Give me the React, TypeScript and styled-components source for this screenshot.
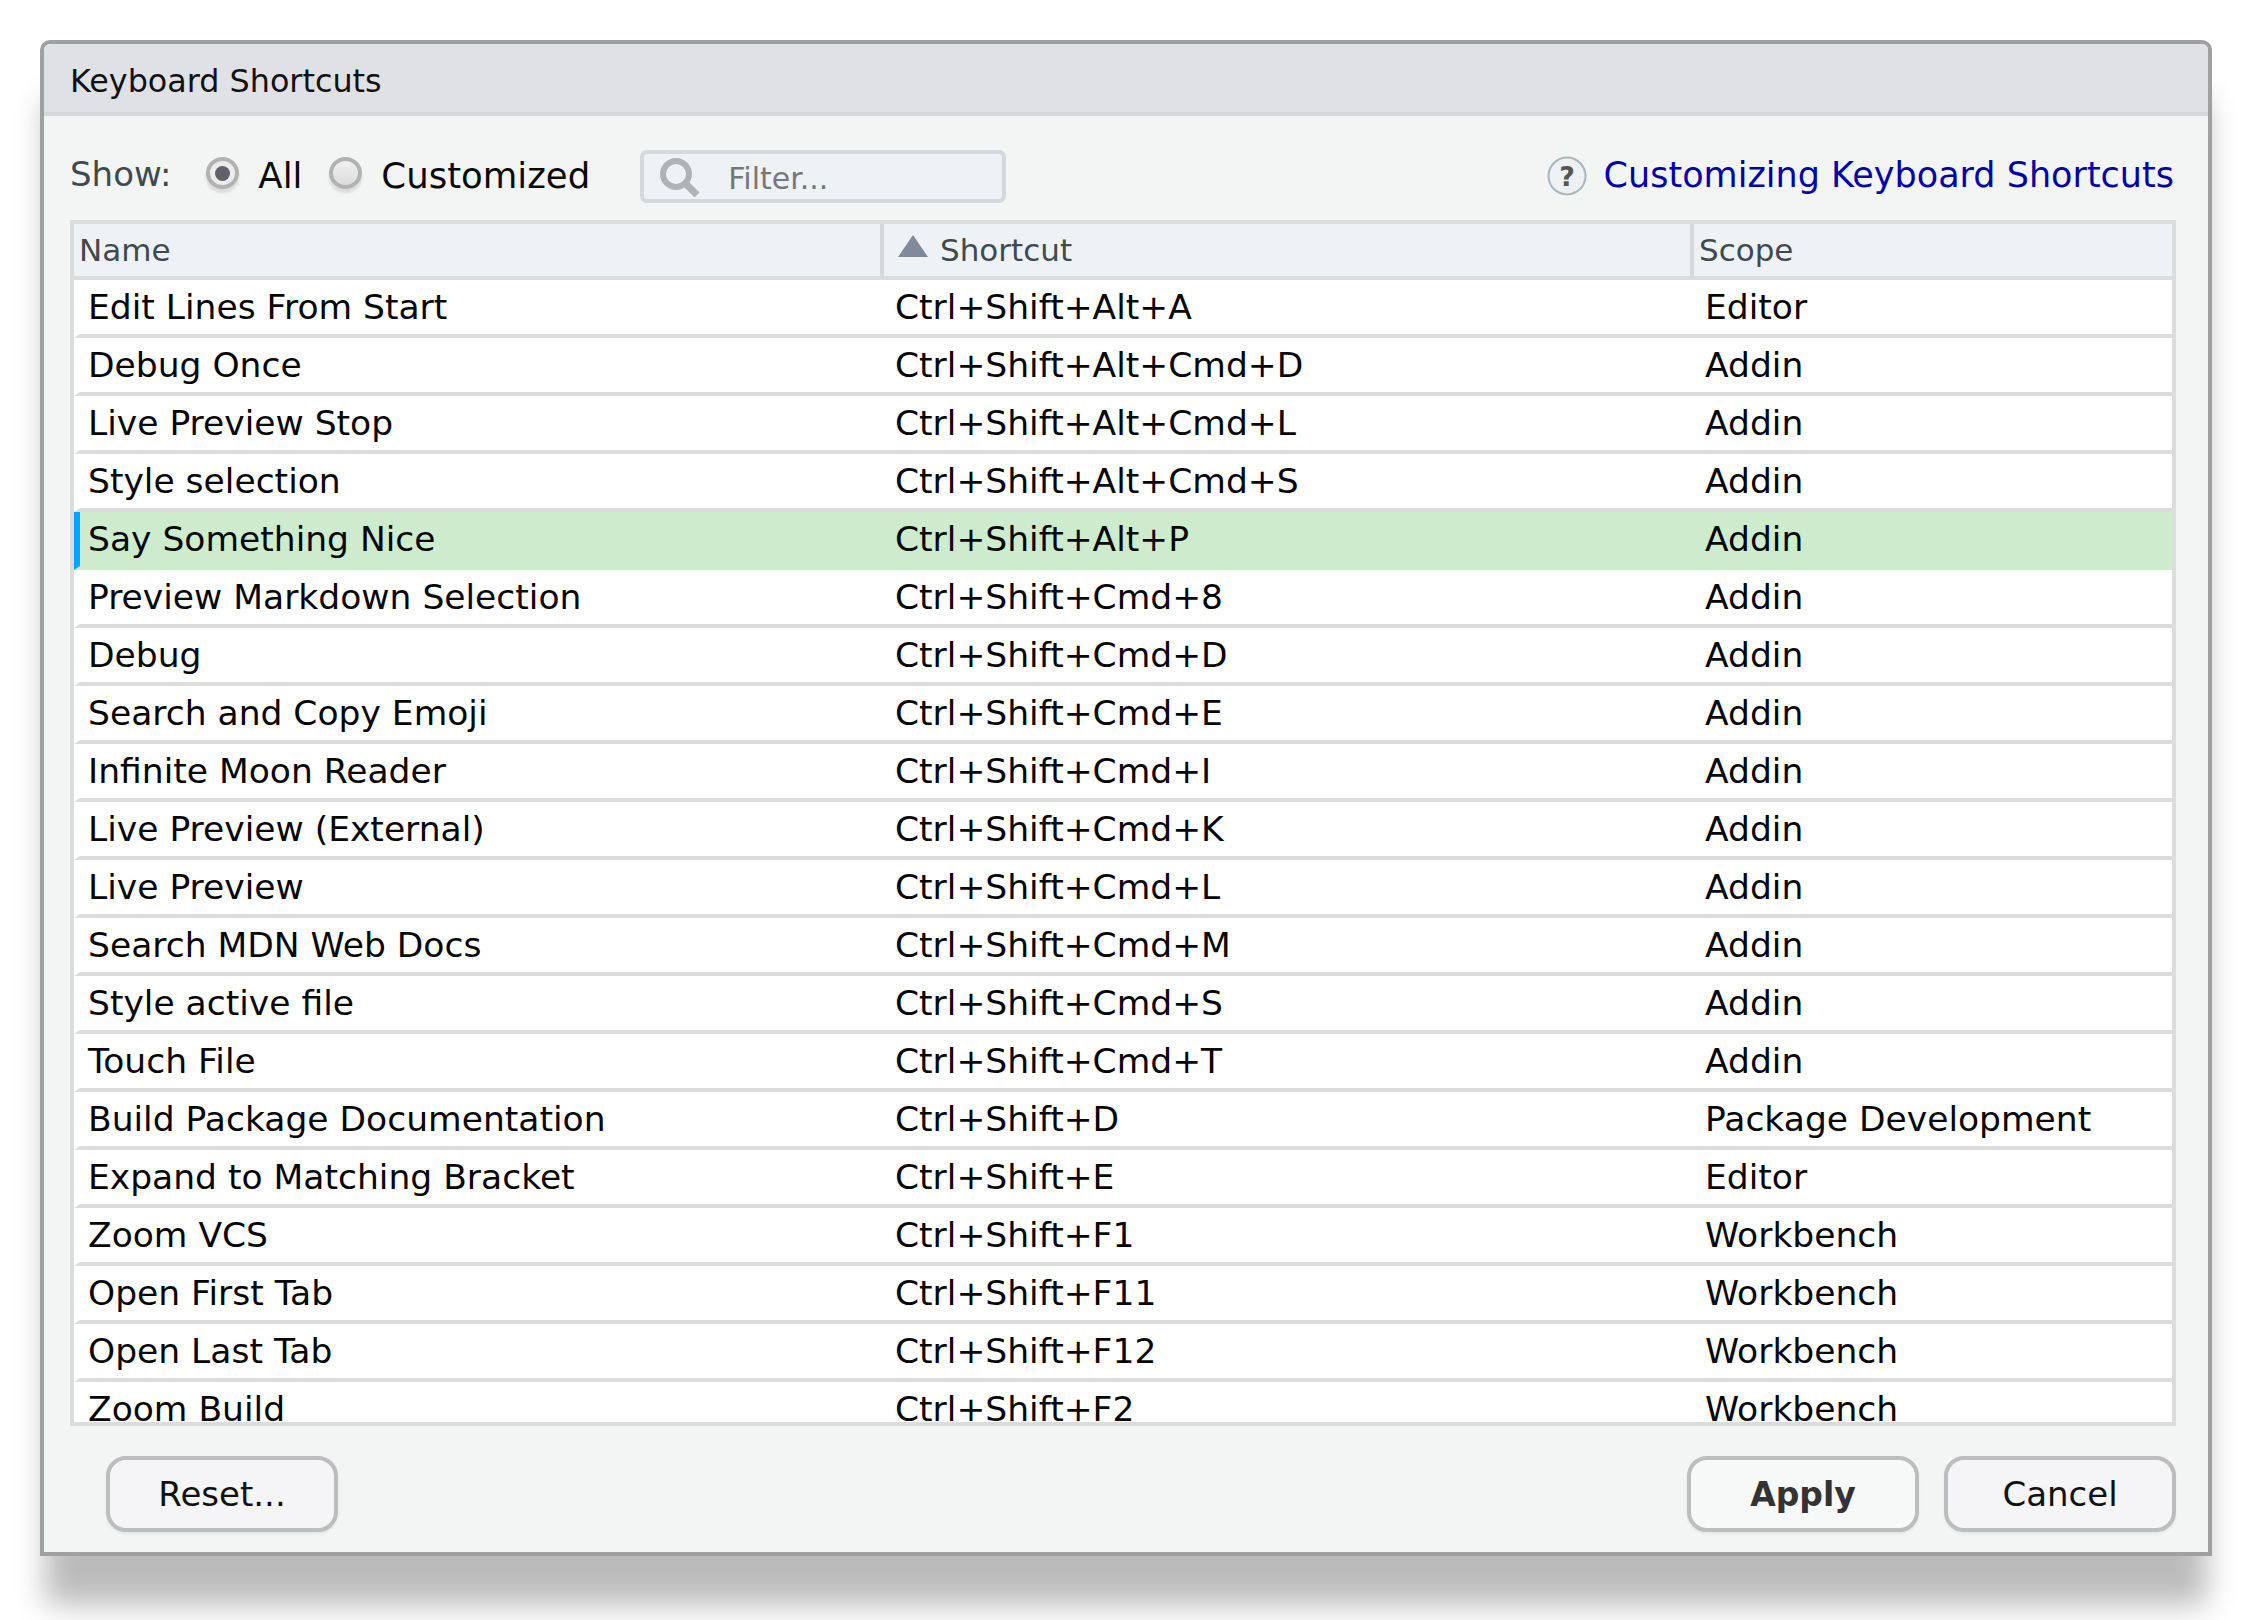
import React from "react";
import styled, { createGlobalStyle } from "styled-components";

const Global = createGlobalStyle`
  html, body { margin: 0; padding: 0; background: #fff; }
  body { width: 2248px; height: 1620px; overflow: hidden; font-family: "DejaVu Sans", sans-serif; }
`;

const Page = styled.div`
  width: 2248px;
  height: 1620px;
  padding: 40px 36px 64px 40px;
  box-sizing: border-box;
`;

const Dialog = styled.div`
  height: 1516px;
  box-sizing: border-box;
  display: flex;
  flex-direction: column;
  background: #f3f5f4;
  border: 4px solid #a0a0a0;
  border-radius: 10px 10px 0 0;
  box-shadow: 0 54px 30px -5px rgba(0, 0, 0, 0.27);
`;

const TitleBar = styled.div`
  height: 64px;
  padding: 4px 0 0 26px;
  box-sizing: content-box;
  display: flex;
  align-items: center;
  background: #e0e1e5;
  border-bottom: 4px solid #d5d8db;
  border-radius: 6px 6px 0 0;
  font-size: 31.8px;
  color: #111;
`;

const Body = styled.div`
  flex: 1;
  display: flex;
  flex-direction: column;
  padding: 34px 32px 20px 26px;
  min-height: 0;
`;

const Toolbar = styled.div`
  height: 53px;
  display: flex;
  align-items: center;
  margin-bottom: 17px;
`;

const ShowLabel = styled.span`
  font-size: 34px;
  color: #3f4a50;
  margin-right: 35px;
  margin-top: -6px;
`;

const Radio = styled.span<{ $on?: boolean }>`
  width: 33px;
  height: 32px;
  box-sizing: border-box;
  border-radius: 50%;
  border: 4px solid #b2b2b2;
  background: ${(p) => (p.$on ? "#ececec" : "linear-gradient(#f0f0f0, #dcdcdc)")};
  box-shadow: 0 4px 3px rgba(0, 0, 0, 0.1);
  display: inline-flex;
  align-items: center;
  justify-content: center;
  margin: -7px 19px 0 0;
  &::after {
    content: "";
    display: ${(p) => (p.$on ? "block" : "none")};
    width: 15px;
    height: 15px;
    border-radius: 50%;
    background: #626266;
  }
`;

const RadioLabel = styled.span<{ $gap: number }>`
  font-size: 35.5px;
  color: #0a0a0a;
  margin-right: ${(p) => p.$gap}px;
  margin-top: -2px;
`;

const Filter = styled.div`
  width: 366px;
  height: 53px;
  box-sizing: border-box;
  display: flex;
  align-items: center;
  padding-left: 16px;
  background: #eff2f5;
  border: 4px solid #d6d9dc;
  border-radius: 7px;
  font-size: 30px;
  color: #777;
`;

const FilterText = styled.span`
  margin-left: 28px;
  margin-top: 4px;
`;

const HelpLink = styled.div`
  margin: -4px 2px 0 auto;
  display: flex;
  align-items: center;
  gap: 17px;
  font-size: 35px;
  color: #0000a8;
`;

const HelpIcon = styled.svg`
  margin-top: 3px;
`;

const Table = styled.div`
  flex: none;
  height: 1206px;
  box-sizing: border-box;
  border: 4px solid #dcdcdc;
  overflow: hidden;
  background: #fff;
`;

const HeaderRow = styled.div`
  display: grid;
  grid-template-columns: 810px 810px 1fr;
  height: 52px;
  box-sizing: content-box;
  background: #eff2f5;
  border-bottom: 4px solid #dcdcdc;
`;

const HeaderCell = styled.div<{ $last?: boolean }>`
  display: flex;
  align-items: center;
  gap: 12px;
  padding-left: 5px;
  font-size: 31px;
  color: #3f4a50;
  border-right: ${(p) => (p.$last ? "none" : "4px solid #d6d9dc")};
`;

const SortArrow = styled.svg`
  width: 30px;
  height: 22px;
  margin: -8px 0 0 9px;
`;

const Row = styled.div<{ $selected?: boolean }>`
  display: grid;
  grid-template-columns: 807px 810px 1fr;
  height: 54px;
  box-sizing: content-box;
  align-items: center;
  font-size: 34.5px;
  color: #050505;
  background: ${(p) => (p.$selected ? "#cdeccd" : "#fff")};
  border-left: 6px solid ${(p) => (p.$selected ? "#00a5ff" : "#fff")};
  border-bottom: 4px solid ${(p) => (p.$selected ? "#cdeccd" : "#dcdcdc")};
`;

const Cell = styled.div`
  padding-left: 8px;
  white-space: nowrap;
`;

const Footer = styled.div`
  display: flex;
  gap: 25px;
  margin-top: 30px;
  padding-left: 36px;
`;

const Button = styled.button<{ $primary?: boolean; $left?: boolean }>`
  width: 232px;
  height: 76px;
  box-sizing: border-box;
  border: 4px solid #bdbdbd;
  border-radius: 20px;
  background: ${(p) => (p.$primary ? "#f7f8f8" : "#f5f5f8")};
  font-family: "DejaVu Sans", sans-serif;
  font-size: ${(p) => (p.$primary ? 33 : 34)}px;
  font-weight: ${(p) => (p.$primary ? 700 : 400)};
  color: ${(p) => (p.$primary ? "#333" : "#111")};
  margin-right: ${(p) => (p.$left ? "auto" : "0")};
  box-shadow: 0 2px 3px rgba(0, 0, 0, 0.06);
  padding: 0;
`;

const rows: [string, string, string][] = [
  ["Edit Lines From Start", "Ctrl+Shift+Alt+A", "Editor"],
  ["Debug Once", "Ctrl+Shift+Alt+Cmd+D", "Addin"],
  ["Live Preview Stop", "Ctrl+Shift+Alt+Cmd+L", "Addin"],
  ["Style selection", "Ctrl+Shift+Alt+Cmd+S", "Addin"],
  ["Say Something Nice", "Ctrl+Shift+Alt+P", "Addin"],
  ["Preview Markdown Selection", "Ctrl+Shift+Cmd+8", "Addin"],
  ["Debug", "Ctrl+Shift+Cmd+D", "Addin"],
  ["Search and Copy Emoji", "Ctrl+Shift+Cmd+E", "Addin"],
  ["Infinite Moon Reader", "Ctrl+Shift+Cmd+I", "Addin"],
  ["Live Preview (External)", "Ctrl+Shift+Cmd+K", "Addin"],
  ["Live Preview", "Ctrl+Shift+Cmd+L", "Addin"],
  ["Search MDN Web Docs", "Ctrl+Shift+Cmd+M", "Addin"],
  ["Style active file", "Ctrl+Shift+Cmd+S", "Addin"],
  ["Touch File", "Ctrl+Shift+Cmd+T", "Addin"],
  ["Build Package Documentation", "Ctrl+Shift+D", "Package Development"],
  ["Expand to Matching Bracket", "Ctrl+Shift+E", "Editor"],
  ["Zoom VCS", "Ctrl+Shift+F1", "Workbench"],
  ["Open First Tab", "Ctrl+Shift+F11", "Workbench"],
  ["Open Last Tab", "Ctrl+Shift+F12", "Workbench"],
  ["Zoom Build", "Ctrl+Shift+F2", "Workbench"],
];

export default function App() {
  return (
    <Page>
      <Global />
      <Dialog>
        <TitleBar>Keyboard Shortcuts</TitleBar>
        <Body>
          <Toolbar>
            <ShowLabel>Show:</ShowLabel>
            <Radio $on />
            <RadioLabel $gap={27}>All</RadioLabel>
            <Radio />
            <RadioLabel $gap={50}>Customized</RadioLabel>
            <Filter>
              <svg width="40" height="40" viewBox="0 0 40 40">
                <circle cx="16" cy="17" r="13" fill="none" stroke="#aeb3b5" strokeWidth="6" />
                <path d="M26 27 L37 38" stroke="#aeb3b5" strokeWidth="7" />
              </svg>
              <FilterText>Filter...</FilterText>
            </Filter>
            <HelpLink>
              <HelpIcon width="40" height="40" viewBox="0 0 40 40">
                <circle cx="20" cy="20" r="18.5" fill="#eef1f3" stroke="#a9b6bc" strokeWidth="2" />
                <text x="20" y="30" textAnchor="middle" fontSize="27" fontWeight="700" fontFamily="DejaVu Sans" fill="#555">?</text>
              </HelpIcon>
              <span>Customizing Keyboard Shortcuts</span>
            </HelpLink>
          </Toolbar>
          <Table>
            <HeaderRow>
              <HeaderCell>Name</HeaderCell>
              <HeaderCell>
                <SortArrow viewBox="0 0 30 22">
                  <path d="M15 0 L30 22 L0 22 Z" fill="#818a9a" />
                </SortArrow>
                Shortcut
              </HeaderCell>
              <HeaderCell $last>Scope</HeaderCell>
            </HeaderRow>
            {rows.map((r, i) => (
              <Row key={r[0]} $selected={i === 4}>
                <Cell>{r[0]}</Cell>
                <Cell>{r[1]}</Cell>
                <Cell>{r[2]}</Cell>
              </Row>
            ))}
          </Table>
          <Footer>
            <Button $left>Reset...</Button>
            <Button $primary>Apply</Button>
            <Button>Cancel</Button>
          </Footer>
        </Body>
      </Dialog>
    </Page>
  );
}
